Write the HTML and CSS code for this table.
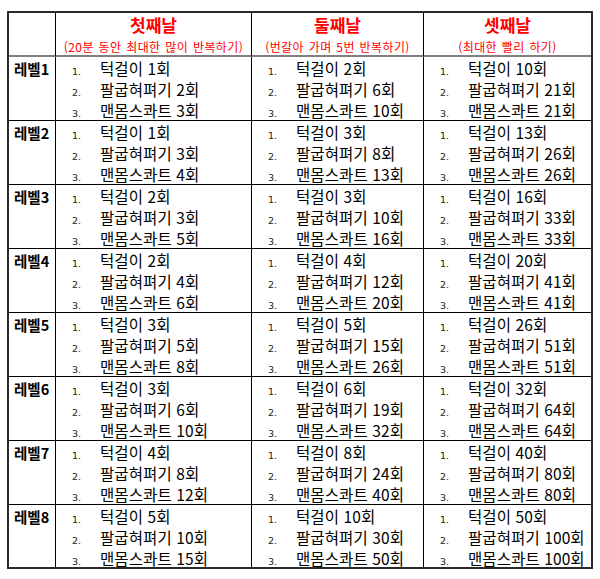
FILE: index.html
```html
<!DOCTYPE html>
<html lang="ko">
<head>
<meta charset="utf-8">
<link rel="stylesheet" href="styles.css">
</head>
<body>
<table class="plan">
  <colgroup>
    <col class="c0"><col class="c1"><col class="c2"><col class="c3">
  </colgroup>
  <thead>
    <tr>
      <th class="corner"><div class="hbox"></div></th>
      <th><div class="hbox"><div class="title">첫째날</div><div class="sub">(20분 동안 최대한 많이 반복하기)</div></div></th>
      <th><div class="hbox"><div class="title">둘째날</div><div class="sub">(번갈아 가며 5번 반복하기)</div></div></th>
      <th class="last"><div class="hbox"><div class="title">셋째날</div><div class="sub">(최대한 빨리 하기)</div></div></th>
    </tr>
  </thead>
  <tbody id="rows"></tbody>
</table>
<script src="app.js"></script>
</body>
</html>
```
FILE: app.js
```js
const data = [
  [[1,2,3],[2,6,10],[10,21,21]],
  [[1,3,4],[3,8,13],[13,26,26]],
  [[2,3,5],[3,10,16],[16,33,33]],
  [[2,4,6],[4,12,20],[20,41,41]],
  [[3,5,8],[5,15,26],[26,51,51]],
  [[3,6,10],[6,19,32],[32,64,64]],
  [[4,8,12],[8,24,40],[40,80,80]],
  [[5,10,15],[10,30,50],[50,100,100]]
];
const names = ['턱걸이', '팔굽혀펴기', '맨몸스콰트'];
const tbody = document.getElementById('rows');
data.forEach((row, i) => {
  const tr = document.createElement('tr');
  if (i === data.length - 1) tr.className = 'lastrow';
  let html = '<td class="lvl"><div class="cbox">레벨' + (i + 1) + '</div></td>';
  row.forEach((day, j) => {
    html += '<td' + (j === 2 ? ' class="last"' : '') + '><div class="cbox"><ol class="items">';
    day.forEach((n, k) => {
      html += '<li><span class="num">' + (k + 1) + '.</span><span class="txt">' + names[k] + ' ' + n + '회</span></li>';
    });
    html += '</ol></div></td>';
  });
  tr.innerHTML = html;
  tbody.appendChild(tr);
});
```
FILE: styles.css
```css
html, body {
  margin: 0;
  padding: 0;
  background: #fff;
}
body {
  padding: 11px 0 0 7px;
  font-family: "Noto Sans CJK KR", "Noto Sans", sans-serif;
  color: #000;
}
.plan {
  border-collapse: separate;
  border-spacing: 0;
  table-layout: fixed;
  width: 586px;
  border: 2px solid #2a2a2a;
}
.c0 { width: 47px; }
.c1 { width: 196px; }
.c2 { width: 172px; }
.c3 { width: 167px; }
.plan th, .plan td {
  padding: 0;
  vertical-align: top;
  border-right: 1px solid #000;
  border-bottom: 1px solid #000;
}
.plan th.last, .plan td.last { border-right: none; }
.plan thead th { border-bottom: 2px solid #808080; font-weight: normal; }
.plan tr.lastrow td { border-bottom: none; }
.hbox {
  height: 42px;
  box-sizing: border-box;
  padding-top: 1px;
  text-align: center;
  color: #ff0000;
}
.title {
  font-size: 17px;
  font-weight: bold;
  line-height: 22px;
}
.sub {
  margin-top: 3px;
  font-size: 12px;
  line-height: 16px;
  letter-spacing: 0.4px;
  word-spacing: 1px;
  white-space: nowrap;
}
.cbox {
  height: 63px;
  box-sizing: border-box;
  padding-top: 1px;
}
.plan tr.lastrow .cbox { height: 62px; }
.lvl .cbox {
  padding-left: 5px;
  font-size: 14.5px;
  font-weight: bold;
  line-height: 21px;
  padding-top: 1px;
  white-space: nowrap;
}
.items {
  list-style: none;
  margin: 0;
  padding: 0 0 0 16px;
}
.items li {
  display: flex;
  align-items: baseline;
  height: 21px;
  line-height: 21px;
  white-space: nowrap;
}
.num {
  width: 28px;
  flex: none;
  font-family: "DejaVu Sans", sans-serif;
  font-size: 9.5px;
  color: #222;
}
.txt {
  font-size: 15.5px;
  letter-spacing: 0.1px;
}
```
